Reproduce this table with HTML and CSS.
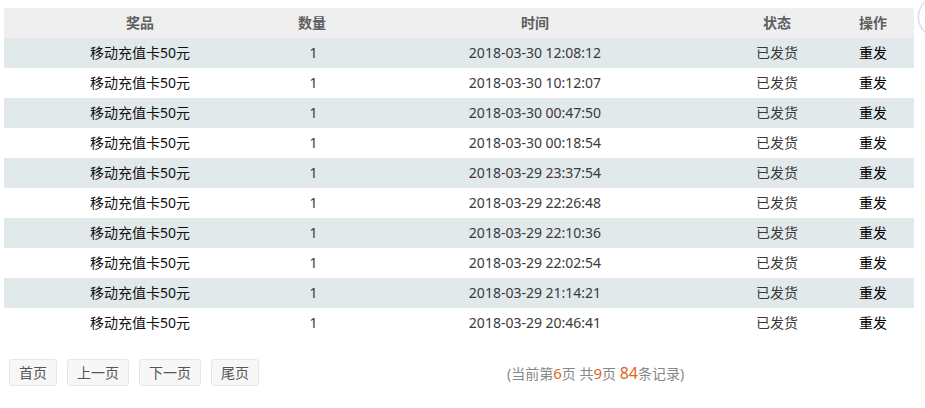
FILE: index.html
```html
<!DOCTYPE html>
<html lang="zh-CN">
<head>
<meta charset="utf-8">
<title>兑换记录</title>
<link rel="stylesheet" href="styles.css">
</head>
<body>
<div class="wrap">
  <table class="records">
    <colgroup>
      <col class="c-prize"><col class="c-qty"><col class="c-time"><col class="c-status"><col class="c-op">
    </colgroup>
    <thead>
      <tr><th>奖品</th><th>数量</th><th>时间</th><th>状态</th><th>操作</th></tr>
    </thead>
    <tbody>
      <tr><td class="prize">移动充值卡50元</td><td class="qty">1</td><td>2018-03-30 12:08:12</td><td>已发货</td><td class="op">重发</td></tr>
      <tr><td class="prize">移动充值卡50元</td><td class="qty">1</td><td>2018-03-30 10:12:07</td><td>已发货</td><td class="op">重发</td></tr>
      <tr><td class="prize">移动充值卡50元</td><td class="qty">1</td><td>2018-03-30 00:47:50</td><td>已发货</td><td class="op">重发</td></tr>
      <tr><td class="prize">移动充值卡50元</td><td class="qty">1</td><td>2018-03-30 00:18:54</td><td>已发货</td><td class="op">重发</td></tr>
      <tr><td class="prize">移动充值卡50元</td><td class="qty">1</td><td>2018-03-29 23:37:54</td><td>已发货</td><td class="op">重发</td></tr>
      <tr><td class="prize">移动充值卡50元</td><td class="qty">1</td><td>2018-03-29 22:26:48</td><td>已发货</td><td class="op">重发</td></tr>
      <tr><td class="prize">移动充值卡50元</td><td class="qty">1</td><td>2018-03-29 22:10:36</td><td>已发货</td><td class="op">重发</td></tr>
      <tr><td class="prize">移动充值卡50元</td><td class="qty">1</td><td>2018-03-29 22:02:54</td><td>已发货</td><td class="op">重发</td></tr>
      <tr><td class="prize">移动充值卡50元</td><td class="qty">1</td><td>2018-03-29 21:14:21</td><td>已发货</td><td class="op">重发</td></tr>
      <tr><td class="prize">移动充值卡50元</td><td class="qty">1</td><td>2018-03-29 20:46:41</td><td>已发货</td><td class="op">重发</td></tr>
    </tbody>
  </table>
  <div class="pager">
    <a class="btn">首页</a>
    <a class="btn">上一页</a>
    <a class="btn">下一页</a>
    <a class="btn">尾页</a>
    <span class="info">(当前第<em>6</em>页 共<em>9</em>页 <em class="big">84</em>条记录)</span>
  </div>
</div>
<div class="float-circle"></div>
</body>
</html>
```
FILE: styles.css
```css
html, body {
  margin: 0;
  padding: 0;
  background: #fff;
}
body {
  font-family: "Noto Sans", "Noto Sans CJK SC", sans-serif;
  font-size: 14px;
  color: #333;
  position: relative;
  overflow: hidden;
  height: 408px;
}
.wrap {
  padding: 8px 11px 0 4px;
}
.records {
  width: 910px;
  border-collapse: collapse;
  table-layout: fixed;
}
.c-prize { width: 272px; }
.c-qty { width: 72px; }
.c-time { width: 374px; }
.c-status { width: 110px; }
.c-op { width: 82px; }
.records th,
.records td {
  height: 30px;
  padding: 0;
  text-align: center;
  vertical-align: middle;
  line-height: 30px;
}
.records th {
  background: #efefef;
  color: #5e5e5e;
  font-weight: bold;
}
.records tbody tr:nth-child(odd) td {
  background: #e2e9eb;
}
.records td {
  color: #3a3a3a;
}
.records td.qty {
  padding-left: 3px;
}
.records td.prize {
  color: #111;
}
.records td.op {
  color: #000;
  font-weight: normal;
}
.pager {
  display: flex;
  align-items: center;
  gap: 10px;
  padding: 21px 0 0 5px;
}
.btn {
  display: inline-block;
  height: 25px;
  line-height: 25px;
  padding: 0 9px;
  border: 1px solid #e6e6e6;
  border-radius: 3px;
  background: #f7f7f7;
  color: #555;
  font-size: 14px;
}
.info {
  margin-left: 238px;
  color: #888;
  font-size: 14px;
}
.info em {
  font-style: normal;
  color: #e0641e;
  font-size: 15px;
}
.info em.big {
  font-size: 16px;
}
.float-circle {
  position: absolute;
  left: 918px;
  top: -4px;
  width: 40px;
  height: 40px;
  border: 1px solid #cdd9e6;
  border-radius: 50%;
  background: #fff;
  box-shadow: 0 0 2px rgba(150, 175, 200, 0.4);
}
```
